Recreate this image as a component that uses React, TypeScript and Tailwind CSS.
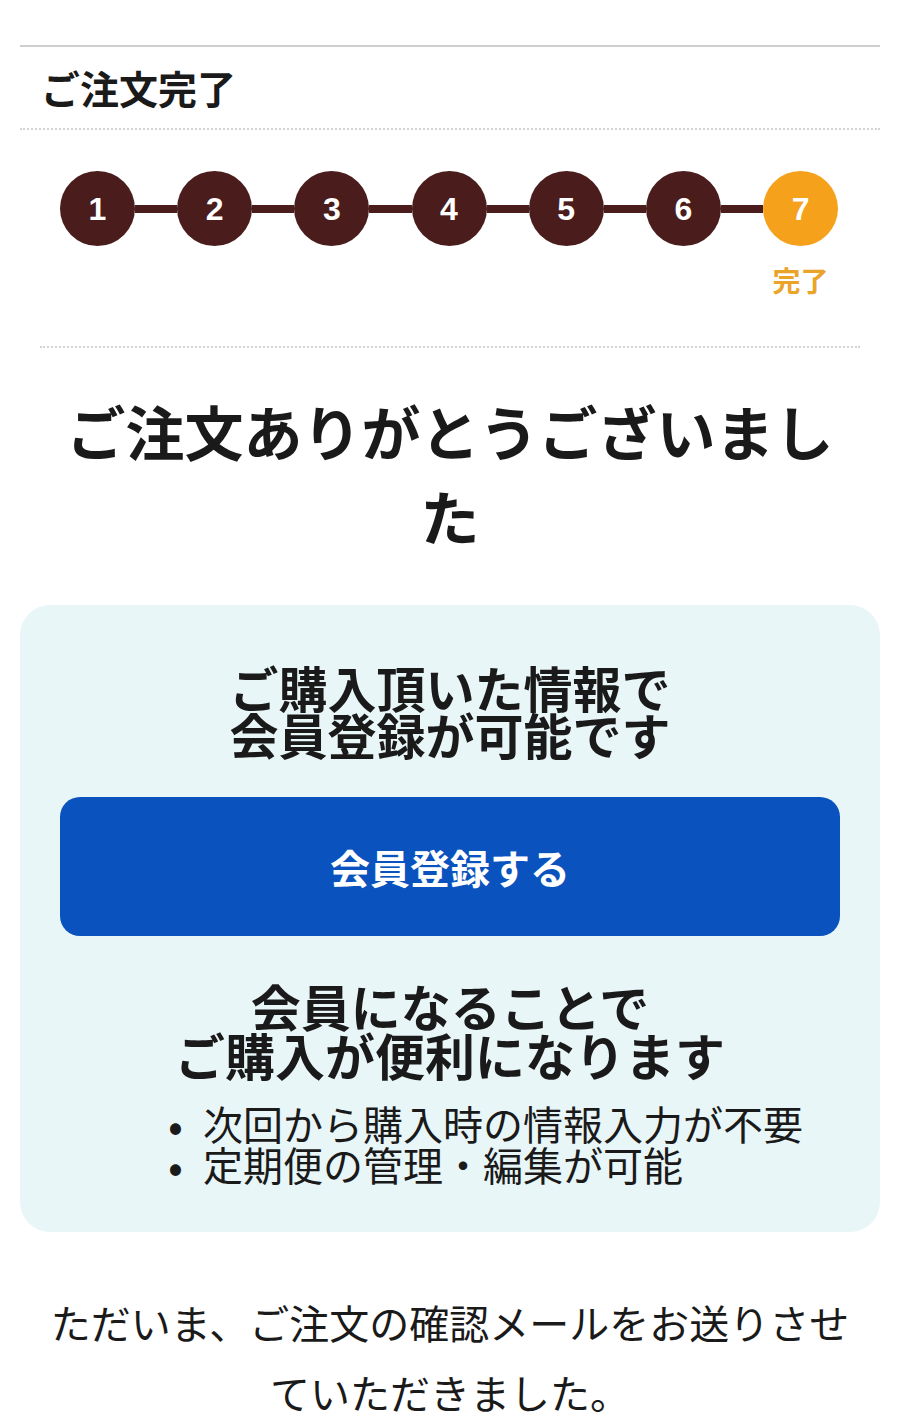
import React from "react";

const steps = [1, 2, 3, 4, 5, 6, 7];

export default function App() {
  return (
    <div
      className="w-[900px] bg-white text-[#1a1a1a]"
      style={{ fontFamily: '"Noto Sans CJK JP", "Noto Sans", sans-serif' }}
    >
      <div className="h-[45px]" />
      <div className="mx-5 border-t-2 border-[#cfcfcf]" />
      <div className="mx-5 h-[81px] flex items-center pl-[21px]">
        <h1 className="text-[39px] font-bold leading-none">ご注文完了</h1>
      </div>
      <div className="mx-5 border-t-2 border-dotted border-[#d4d4d4]" />

      <div className="pt-[41px] px-[60px]">
        <div className="flex items-center w-[778px]">
          {steps.map((n, i) => (
            <React.Fragment key={n}>
              {i > 0 && <div className="flex-1 h-[8px] bg-[#4a1c1c]" />}
              <div
                className={`w-[75px] h-[75px] shrink-0 rounded-full flex items-center justify-center text-white text-[32px] font-bold leading-none ${
                  n === 7 ? "bg-[#f5a11b]" : "bg-[#4a1c1c]"
                }`}
                style={{ fontFamily: '"Liberation Sans", Arial, sans-serif' }}
              >
                {n}
              </div>
            </React.Fragment>
          ))}
        </div>
        <div className="flex justify-end w-[778px] pt-[20px]">
          <div className="w-[75px] text-center text-[28px] font-bold leading-none text-[#eaa42a]">
            完了
          </div>
        </div>
      </div>

      <div className="mx-10 mt-[52px] border-t-2 border-dotted border-[#d4d4d4]" />

      <h2 className="mx-[50px] mt-[40px] text-center text-[59px] font-bold leading-[85px]">
        ご注文ありがとうございました
      </h2>

      <div className="mx-5 mt-[47px] rounded-[30px] bg-[#e9f6f8] px-10 pt-[58px] pb-[47px]">
        <p className="text-center text-[49px] font-bold leading-[47px]">
          ご購入頂いた情報で
          <br />
          会員登録が可能です
        </p>
        <button className="mt-[40px] w-full h-[139px] rounded-[20px] bg-[#0a52bd] text-white text-[40px] font-bold flex items-center justify-center">
          会員登録する
        </button>
        <p className="mt-[45px] text-center text-[50px] font-bold leading-[49px]">
          会員になることで
          <br />
          ご購入が便利になります
        </p>
        <ul className="mt-[24px] pl-[108px] text-[40px] leading-[41px]">
          <li className="flex items-center">
            <span className="w-[35px] text-[44px] leading-[41px]">•</span>次回から購入時の情報入力が不要
          </li>
          <li className="flex items-center">
            <span className="w-[35px] text-[44px] leading-[41px]">•</span>定期便の管理・編集が可能
          </li>
        </ul>
      </div>

      <p className="mx-10 mt-[55px] text-center text-[40px] leading-[70px]">
        ただいま、ご注文の確認メールをお送りさせていただきました。
      </p>
    </div>
  );
}
